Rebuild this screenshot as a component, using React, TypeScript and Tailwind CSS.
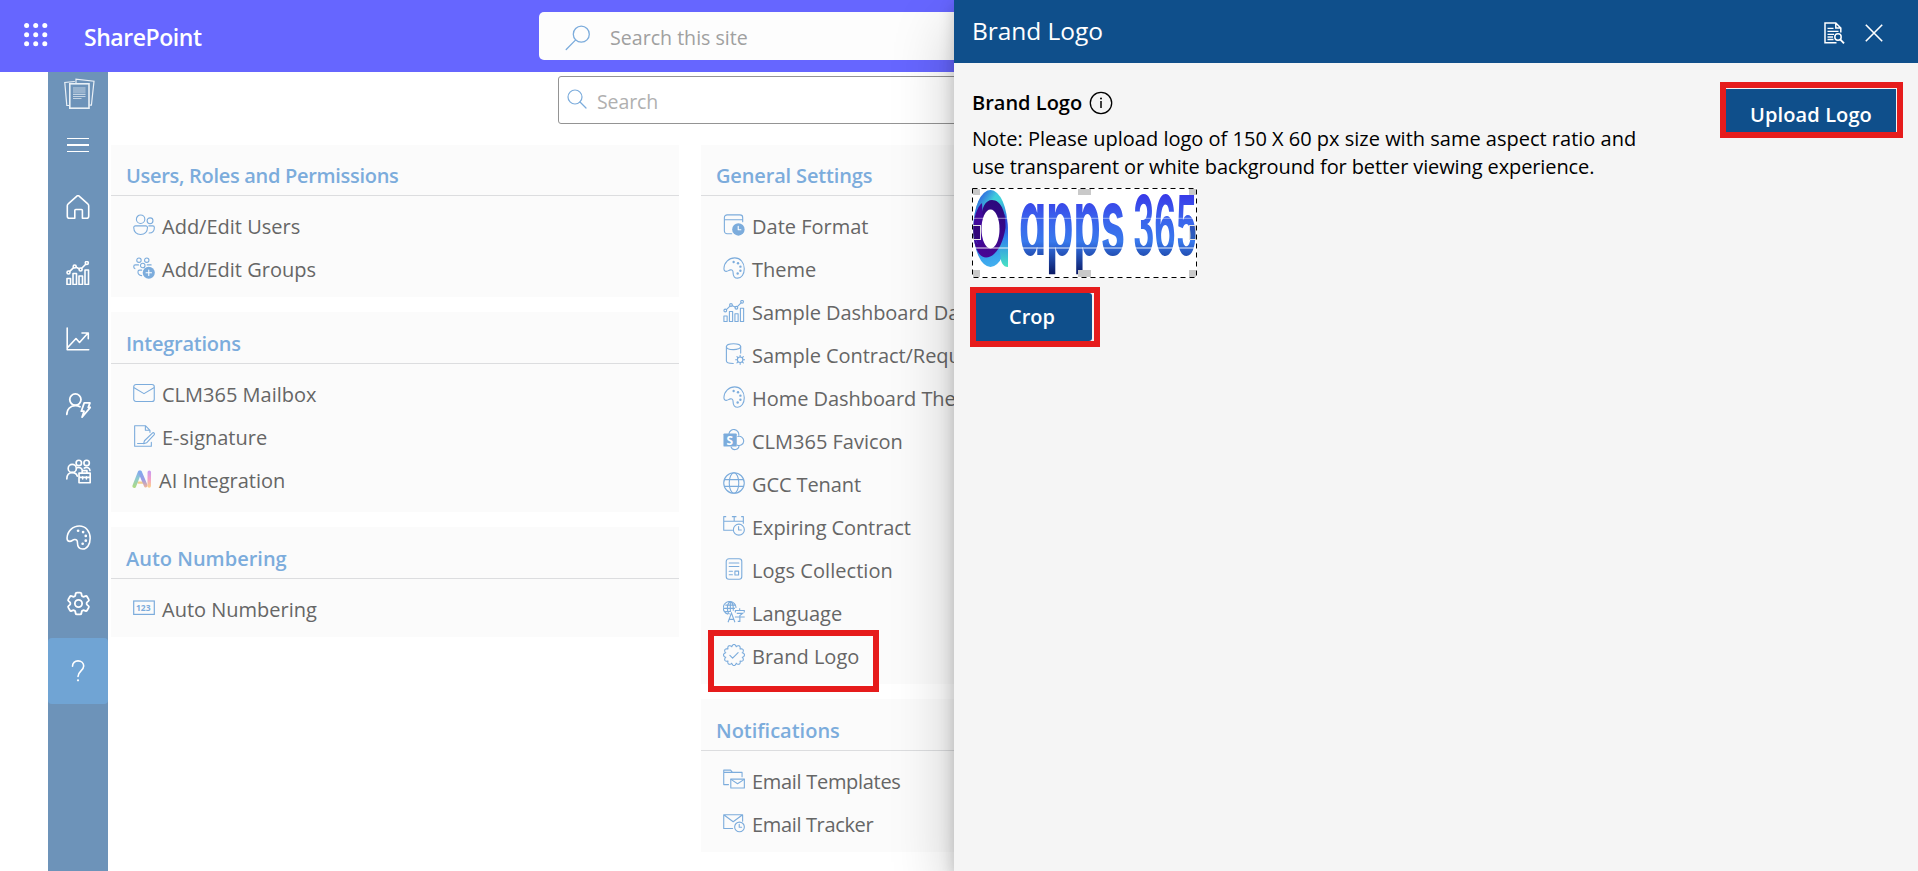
import type { ReactNode } from "react";
import { HiOutlineCog6Tooth } from "react-icons/hi2";

type IconProps = { size?: number; weight?: number };

function Svg({ size = 22, weight = 1.2, children }: IconProps & { children: ReactNode }) {
  return (
    <svg
      width={size}
      height={size}
      viewBox="0 0 24 24"
      fill="none"
      stroke="currentColor"
      strokeWidth={weight}
      strokeLinecap="round"
      strokeLinejoin="round"
      className="shrink-0"
    >
      {children}
    </svg>
  );
}

const Palette = (p: IconProps) => (
  <Svg {...p}>
    <path d="M1 12.6C1.3 5.8 6.6 1 12.8 1 18.900 1 23.200 6 23.200 12.800c0 6-3 10.300-7.200 10.300-3.600 0-5-2.700-5-6 0-2-.8-3.300-2.700-3.100-2 .2-2.700 1.700-4.600 1.700C2 15.700 1 14.500 1 12.600Z" />
    {[[11.600, 5.500], [16.400, 6.800], [19, 10.500], [19, 15], [16, 18]].map(([x, y]) => (
      <circle key={`${x}-${y}`} cx={x} cy={y} r="1.300" fill="currentColor" stroke="none" />
    ))}
  </Svg>
);

const BarsLine = (p: IconProps) => (
  <Svg {...p}>
    <rect x="1" y="17.500" width="3.500" height="6" />
    <rect x="7" y="12.500" width="3.500" height="11" />
    <rect x="13" y="15" width="3.500" height="8.500" />
    <rect x="19" y="9" width="3.500" height="14.500" />
    <circle cx="2.500" cy="11.500" r="1.500" />
    <circle cx="8.700" cy="5.500" r="1.500" />
    <circle cx="14.600" cy="8.500" r="1.500" />
    <circle cx="20.800" cy="2" r="1.500" />
    <path d="m3.700 10.400 3.900-3.800M10.200 6.200l3 1.500M15.700 7.300l4-4.100" />
  </Svg>
);

const Users = () => (
  <Svg>
    <circle cx="8.300" cy="5.700" r="4.600" />
    <circle cx="18.600" cy="7.400" r="3.200" />
    <path d="M2.600 13H14a1.800 1.800 0 0 1 1.800 1.800c0 4.500-3 7.600-7.500 7.600S.8 19.300.8 14.800A1.800 1.800 0 0 1 2.600 13ZM17.300 13h4.300a1.700 1.700 0 0 1 1.700 1.700c0 3.500-2 5.900-5.700 6.100" />
  </Svg>
);

const Groups = () => (
  <Svg>
    <circle cx="6.500" cy="3.500" r="2.400" />
    <circle cx="15" cy="3.500" r="2.400" />
    <circle cx="10.600" cy="9.300" r="2.500" />
    <path d="M6 8.600H2.500C1.300 8.600.8 9.500.8 10.500c0 1 .5 1.700 1.300 2.200M15.500 8.600h4.300M9.500 14.300H7.200c-1.200 0-1.800.9-1.800 2 0 2 1.500 3.600 4 4" />
    <circle cx="17.200" cy="17.200" r="6.600" fill="currentColor" stroke="none" />
    <path d="M17.200 14.200v6M14.200 17.200h6" stroke="#fff" />
  </Svg>
);

const Mail = () => (
  <Svg>
    <rect x=".8" y="2.800" width="22.400" height="18.400" rx="2.500" />
    <path d="m1.200 6.300 10.800 6.400 10.800-6.400" />
  </Svg>
);

const Sign = () => (
  <Svg>
    <path d="M20 19v4.200H1.800V.8h11.700l5 5V8M13.500.8v5h5" />
    <path d="M21.700 8.400a1.400 1.400 0 0 1 1.500 2l-8.400 9-3.200 1 .9-3.200ZM5 20.200h6.600" />
  </Svg>
);

const Ai = () => (
  <svg width="20" height="20" viewBox="0 0 20 20" fill="none" strokeLinecap="round" strokeLinejoin="round" className="-ml-px shrink-0">
    <defs>
      <linearGradient id="ai-a" gradientUnits="userSpaceOnUse" x1="0" y1="2" x2="0" y2="18">
        <stop offset="0" stopColor="#84a9ee" />
        <stop offset=".45" stopColor="#8cc9d2" />
        <stop offset="1" stopColor="#aeda82" />
      </linearGradient>
      <linearGradient id="ai-b" gradientUnits="userSpaceOnUse" x1="0" y1="2" x2="0" y2="18">
        <stop offset="0" stopColor="#7dabee" />
        <stop offset=".55" stopColor="#9b9be4" />
        <stop offset="1" stopColor="#f0b39a" />
      </linearGradient>
      <linearGradient id="ai-c" gradientUnits="userSpaceOnUse" x1="0" y1="2" x2="0" y2="18">
        <stop offset="0" stopColor="#c79af2" />
        <stop offset=".5" stopColor="#f3a0c8" />
        <stop offset="1" stopColor="#fbcf8b" />
      </linearGradient>
    </defs>
    <path d="M6.500 13.600h5" stroke="#f4cf8c" strokeWidth="2.400" />
    <path d="M2.300 17 7.600 3.400" stroke="url(#ai-a)" strokeWidth="3.700" />
    <path d="M8.200 3.400 13.700 16.500" stroke="url(#ai-b)" strokeWidth="3.700" />
    <path d="M17.300 3.200 17.200 17" stroke="url(#ai-c)" strokeWidth="3.500" />
  </svg>
);

const Numbers = () => (
  <svg width="22" height="22" viewBox="0 0 22 22" fill="none" className="shrink-0">
    <rect x=".7" y="4" width="20.600" height="13.400" stroke="currentColor" strokeWidth="1.200" />
    <text x="3" y="13.700" fontSize="8.500" fontWeight="700" fontFamily="Open Sans, sans-serif" fill="currentColor" textLength="14.500">
      123
    </text>
  </svg>
);

const DateIcon = () => (
  <Svg>
    <path d="M9.500 21.500H4.500A3 3 0 0 1 1.500 18.500V4a3 3 0 0 1 3-3H18.500a3 3 0 0 1 3 3V8.500M1.500 6.200h20" />
    <circle cx="16.800" cy="16.800" r="6.800" fill="currentColor" stroke="none" />
    <path d="M16.600 13.300v3.800h2.900" stroke="#fff" />
  </Svg>
);

const Database = () => (
  <Svg>
    <ellipse cx="11.500" cy="4" rx="7.800" ry="3.200" />
    <path d="M3.700 4v15.500c0 1.700 2.600 2.600 7.500 2.900M19.300 4v7" />
    <circle cx="18.700" cy="18.300" r="3" />
    <path d="M18.700 13.400v1.800M18.700 21.400v1.900M13.800 18.300h1.800M21.800 18.300h1.900M15.200 14.800l1.300 1.300M20.900 20.500l1.300 1.300M15.200 21.800l1.300-1.300M20.900 16.100l1.300-1.300" />
  </Svg>
);

const Favicon = () => (
  <Svg>
    <path d="M6.500 5.200a5.400 5.400 0 0 1 10.700 1.600M16.200 8.200a5 5 0 1 1-.6 9.400M17.500 18a4.500 4.500 0 0 1-8.700 1.600" />
    <rect x=".5" y="4.800" width="14.500" height="14.400" rx="1" fill="currentColor" stroke="none" />
    <text x="3.800" y="17" fontSize="13" fontWeight="700" fontFamily="Open Sans, sans-serif" fill="#fff" stroke="none">
      S
    </text>
  </Svg>
);

const Globe = () => (
  <Svg>
    <circle cx="12" cy="12" r="11.200" />
    <ellipse cx="12" cy="12" rx="5.200" ry="11.200" />
    <path d="M1.800 8.300h20.400M1.800 15.700h20.400" />
  </Svg>
);

const Expiring = () => (
  <Svg>
    <path d="M3 1.800H.8v14.800h9.500M.8 6.800h21.400M10.200 1.800h4M12.200 1.800v5M20.300 1.800h1.900V9" />
    <circle cx="17.300" cy="16" r="6" />
    <path d="M17 12.500v3.800h3" />
  </Svg>
);

const Logs = () => (
  <Svg>
    <rect x="3.500" y=".8" width="17" height="22.400" rx="3" />
    <path d="M6.800 5.500h10.500M6.800 9.300h10.500M6.800 14.500h3.500M6.800 18.300h3.500" />
    <rect x="13" y="14.300" width="4" height="4.200" />
  </Svg>
);

const Language = () => (
  <svg width="22" height="22" viewBox="0 0 24 24" fill="none" stroke="currentColor" strokeWidth="1.200" className="shrink-0">
    <path d="M14.300 7.500A7 7 0 1 0 5.500 14.300" />
    <path d="M11.200 10.500V8C11.200 4 9.800 1 8 1S4.800 4 4.800 8s1 5.500 2.200 6.500" />
    <path d="M1 8h12M2.500 4.500h11M2.300 11.500h6M8 1v11" />
    <path d="m5.500 23.200 3.700-10 3.800 10M6.800 20h4.900" />
    <path d="M13.500 12.500V10.300h9.700v2.200M18.200 8v2.300M15 13.500h6.400l-3 2.300v6.400h-2.300M13 17.500h10.700" />
  </svg>
);

const badgePath = (() => {
  const pts: string[] = [];
  for (let i = 0; i <= 144; i++) {
    const a = (i / 144) * Math.PI * 2;
    const r = 9.300 + 2.200 * Math.abs(Math.cos(a * 6)) ** 0.9;
    pts.push(`${(12 + r * Math.sin(a)).toFixed(2)} ${(12 - r * Math.cos(a)).toFixed(2)}`);
  }
  return `M${pts.join("L")}Z`;
})();

const Badge = () => (
  <Svg>
    <path d={badgePath} />
    <path d="m7.500 12.500 3 3 6-6" />
  </Svg>
);

const Templates = () => (
  <Svg>
    <path d="M6 17H.8V1.200h7.500l2 2.500H20.800V8.500M.8 3.700h9.500" />
    <rect x="8.500" y="11" width="14.800" height="9.800" />
    <path d="m8.700 11.300 7.200 4.700 7.200-4.700" />
  </Svg>
);

const Tracker = () => (
  <Svg>
    <path d="M10.500 18H.8V3h20.600v7M.8 3l10.300 7.600L21.400 3" />
    <circle cx="18" cy="16.300" r="5.300" />
    <path d="M17.700 13.500v3.200h2.600" />
  </Svg>
);

const Documents = () => (
  <svg width="31" height="32" viewBox="0 0 31 32" fill="none" stroke="#e9f0f6" strokeWidth="1.200">
    <path d="M5 27.500H2.800L.8 4.500l10-1M12 5V1.200l18 2-2.600 24H25.500" />
    <rect x="5.800" y="5.800" width="19.200" height="24.400" strokeWidth="1.600" />
    <path d="M9 10h12.500M9 12h12.500M9 14h12.500M9 16.300h12.500M9 18.500h12.500M9 20.500h8.500" opacity=".7" />
  </svg>
);

const Home = () => (
  <Svg size={24} weight={1.600}>
    <path d="M1.300 10.800c0-.8.3-1.500.9-2L10.600 1.300a2 2 0 0 1 2.800 0l8.400 7.500c.6.500.9 1.200.9 2v10.400a2 2 0 0 1-2 2h-4.300v-7.700a1 1 0 0 0-1-1H9.800a1 1 0 0 0-1 1v7.700H3.300a2 2 0 0 1-2-2Z" />
  </Svg>
);

const Trend = () => (
  <Svg size={24} weight={1.600}>
    <path d="M1.200 1v21.800h21.500M1.200 21 10 11.500l3.500 4 8.500-9.500M16 6h6.300v5.800" />
  </Svg>
);

const UserBolt = () => (
  <Svg size={25} weight={1.700}>
    <circle cx="9" cy="6.300" r="5.400" />
    <path d="M.8 20.500c0-4.500 3-8.300 8.200-8.300 1.700 0 3.200.4 4.400 1.100M17.500 9.500h5.500l-1.600 4.300h2l-8 9.400 1.900-5.700h-2.600Z" />
  </Svg>
);

const Team = () => (
  <Svg size={25} weight={1.600}>
    <circle cx="6" cy="9" r="3.900" />
    <path d="M.8 19c0-3.600 1.800-5.900 5.200-5.900 2.600 0 4.200 1.300 4.800 3.300" />
    <circle cx="12.300" cy="3.800" r="2.600" />
    <circle cx="19.800" cy="3.800" r="2.600" />
    <path d="M11 8.300c2.500-.5 4 .6 4.500 2M17.500 8.800c2.500-1.600 5.500-.3 5.500 2.300M12.500 13.500h10.700v9.300H12.500ZM15.500 13.500v-2.300h4.600v2.300M12.500 17.700h10.700M16 17v2M19.600 17v2" />
  </Svg>
);

const Question = () => (
  <Svg size={24} weight={1.600}>
    <path d="M6.500 7.200C6.500 4 8.800 1.900 12 1.900s5.700 2.100 5.700 5.200c0 4.400-5.700 5.400-5.700 10.400" />
    <circle cx="12" cy="21.300" r="1.100" fill="currentColor" stroke="none" />
  </Svg>
);

type Item = { icon: ReactNode; label: string; tracking?: string };

function Card({ title, items, size, tracking = "" }: { title: string; items: Item[]; size: string; tracking?: string }) {
  return (
    <section className={`bg-[#fbfbfb] ${size}`}>
      <h2 className={`flex h-[51px] items-center border-b border-[#dcdddf] pt-[11px] pl-[15px] text-[20px] font-semibold text-[#7cacdc] ${tracking}`}>
        {title}
      </h2>
      <ul className="pt-[9px]">
        {items.map((item) => (
          <li key={item.label} className="flex h-[43px] items-center pl-[22px] text-[#666666]">
            <span className="mb-[3px] text-[#7cacdc]">{item.icon}</span>
            <span className={`ml-[7px] whitespace-nowrap ${item.tracking ?? ""}`}>{item.label}</span>
          </li>
        ))}
      </ul>
    </section>
  );
}

function BrandImage() {
  return (
    <svg width="225" height="90" viewBox="0 0 225 90" className="mt-[7px] block">
      <defs>
        <linearGradient id="word" gradientUnits="userSpaceOnUse" x1="0" y1="6" x2="0" y2="88">
          <stop offset="0" stopColor="#3838e8" />
          <stop offset=".3" stopColor="#3a63ec" />
          <stop offset=".58" stopColor="#3878ec" />
          <stop offset=".75" stopColor="#2350b4" />
          <stop offset="1" stopColor="#08145c" />
        </linearGradient>
        <linearGradient id="ring" gradientUnits="userSpaceOnUse" x1="8" y1="0" x2="28" y2="80">
          <stop offset="0" stopColor="#3fc6e6" />
          <stop offset=".2" stopColor="#3fd0d8" />
          <stop offset=".5" stopColor="#2f5fe6" />
          <stop offset=".85" stopColor="#3aa4ec" />
          <stop offset="1" stopColor="#46b4f0" />
        </linearGradient>
        <linearGradient id="left" gradientUnits="userSpaceOnUse" x1="0" y1="10" x2="16" y2="20">
          <stop offset="0" stopColor="#2a3fe0" />
          <stop offset="1" stopColor="#2a3fe0" stopOpacity="0" />
        </linearGradient>
        <linearGradient id="inner" gradientUnits="userSpaceOnUse" x1="28" y1="12" x2="6" y2="70">
          <stop offset="0" stopColor="#2a0a7c" />
          <stop offset="1" stopColor="#4a0596" />
        </linearGradient>
        <linearGradient id="stem" gradientUnits="userSpaceOnUse" x1="0" y1="28" x2="0" y2="78">
          <stop offset="0" stopColor="#2b2fd0" />
          <stop offset=".45" stopColor="#2f86ee" />
          <stop offset="1" stopColor="#47e0c4" />
        </linearGradient>
      </defs>
      <rect width="225" height="90" fill="#fff" />
      <ellipse cx="18.500" cy="40.500" rx="17.200" ry="38.500" fill="url(#ring)" />
      <ellipse cx="18.500" cy="40.500" rx="17.200" ry="38.500" fill="url(#left)" />
      <path d="M27 20C33 24 36 32 36 44V79C31 79 28.500 74 28.500 68L26 56Z" fill="url(#stem)" />
      <path d="M20 12C29 12 34 24 33.500 40 31 56 24 69 14 69.500 6 69.500 1.300 57 1.300 42 3 56 7 60 12 52L10 36C8 24 12 12 20 12Z" fill="url(#inner)" />
      <path d="M1.300 42C1.300 30 5 19 10 15L12 52C9 62 3 56 1.300 42Z" fill="#40089a" />
      <ellipse cx="18.500" cy="41" rx="9" ry="19.500" fill="#fff" />
      <g fill="url(#word)" fontFamily="Inter, sans-serif" fontWeight="650" style={{ fontFeatureSettings: '"cv11"' }}>
        <text x="47" y="67" fontSize="94" textLength="106" lengthAdjust="spacingAndGlyphs">
          apps
        </text>
        <text x="161" y="67" fontSize="82" textLength="64" lengthAdjust="spacingAndGlyphs">
          365
        </text>
      </g>
      <path d="M0 30.300H225" stroke="#fff" strokeOpacity=".5" />
      <path d="M0 60H225" stroke="#fff" strokeOpacity=".45" strokeWidth="2" />
      <g fill="#c9c9c9">
        <rect width="8" height="7" />
        <rect x="106" width="13" height="7" />
        <rect x="217" width="8" height="7" />
        <rect y="82" width="8" height="8" />
        <rect x="106" y="82" width="13" height="8" />
        <rect x="217" y="82" width="8" height="8" />
      </g>
      <g fill="#000" fillOpacity=".2" stroke="#e4e4e4">
        <rect x=".5" y="37.500" width="8" height="14" />
        <rect x="217.500" y="37.500" width="7" height="14" />
      </g>
      <rect x=".5" y=".5" width="224" height="89" fill="none" stroke="#fff" />
      <rect x=".5" y=".5" width="224" height="89" fill="none" stroke="#000" strokeDasharray="5 4" />
    </svg>
  );
}

const sidebar: ReactNode[] = [
  <Home />,
  <BarsLine size={24} weight={1.600} />,
  <Trend />,
  <UserBolt />,
  <Team />,
  <Palette size={25} weight={1.500} />,
  <HiOutlineCog6Tooth size={29} strokeWidth={1.500} />,
  <Question />,
];

export default function App() {
  return (
    <div className="relative flex h-[871px] w-[1918px] flex-col overflow-hidden bg-white font-['Open_Sans','Noto_Sans',sans-serif] text-[20px] leading-[28px]">
      <header className="flex h-[72px] shrink-0 items-center bg-[#6666ff]">
        <svg width="24" height="24" viewBox="0 0 24 24" fill="#fff" className="mb-[2px] ml-[24px]">
          {[2.600, 11.700, 20.800].map((y) => [2.600, 11.700, 20.800].map((x) => <circle key={`${x}-${y}`} cx={x} cy={y} r="2.500" />))}
        </svg>
        <span className="ml-[36px] w-[455px] pt-[2px] text-[23px] font-semibold tracking-[-0.45px] text-white">SharePoint</span>
        <div className="flex h-[48px] w-[900px] items-center rounded-[5px] bg-[#fdfdfd] pl-[26px]">
          <svg width="26" height="26" viewBox="0 0 26 26" fill="none" stroke="#7cacdc" strokeWidth="1.300" strokeLinecap="round" className="mb-[-4px]">
            <circle cx="16.300" cy="9.200" r="8" />
            <path d="M10.700 14.900 1.200 24.500" />
          </svg>
          <span className="ml-[19px] pt-[3px] text-[19.600px] text-[#a0a0a0]">Search this site</span>
        </div>
      </header>

      <div className="flex grow">
        <nav className="ml-[48px] flex w-[60px] shrink-0 flex-col bg-[#6d93b9] text-white">
          <div className="flex h-[44px] items-center justify-center pl-[2px]">
            <Documents />
          </div>
          <div className="flex h-[58px] flex-col items-center justify-center gap-[5px]">
            <span className="h-[1.500px] w-[22px] bg-white" />
            <span className="h-[1.500px] w-[22px] bg-white" />
            <span className="h-[1.500px] w-[22px] bg-white" />
          </div>
          {sidebar.map((icon, i) => (
            <div
              key={i}
              className={`flex h-[66px] items-center justify-center ${i === sidebar.length - 1 ? "mt-[2px] rounded-[4px] bg-[#70a4d4] pb-px" : ""}`}
            >
              {icon}
            </div>
          ))}
        </nav>

        <main className="pt-[4px]">
          <div className="ml-[450px] flex h-[48px] w-[800px] items-center rounded-[3px] border border-[#949494] pl-[8px]">
            <svg width="20" height="20" viewBox="0 0 20 20" fill="none" stroke="#7cacdc" strokeWidth="1.200" strokeLinecap="round" className="mb-[2px]">
              <circle cx="8" cy="8" r="7" />
              <path d="m13 13 6 6" />
            </svg>
            <span className="ml-[10px] pt-[4px] text-[19.500px] text-[#b0b0b0] tracking-[-0.1px]">Search</span>
          </div>

          <div className="mt-[21px] ml-[3px] flex items-start gap-[22px]">
            <div className="flex w-[568px] flex-col">
              <Card
                title="Users, Roles and Permissions"
                size="h-[152px]"
                tracking="tracking-[-0.3px]"
                items={[
                  { icon: <Users />, label: "Add/Edit Users" },
                  { icon: <Groups />, label: "Add/Edit Groups" },
                ]}
              />
              <Card
                title="Integrations"
                size="mt-[15px] h-[200px] pt-px"
                tracking="tracking-[-0.25px]"
                items={[
                  { icon: <Mail />, label: "CLM365 Mailbox" },
                  { icon: <Sign />, label: "E-signature" },
                  { icon: <Ai />, label: "AI Integration" },
                ]}
              />
              <Card title="Auto Numbering" size="mt-[15px] h-[110px] pt-px" items={[{ icon: <Numbers />, label: "Auto Numbering" }]} />
            </div>

            <div className="flex w-[568px] flex-col">
              <Card
                title="General Settings"
                size="h-[539px]"
                tracking="tracking-[-0.15px]"
                items={[
                  { icon: <DateIcon />, label: "Date Format" },
                  { icon: <Palette />, label: "Theme" },
                  { icon: <BarsLine />, label: "Sample Dashboard Data", tracking: "tracking-[-0.05px]" },
                  { icon: <Database />, label: "Sample Contract/Request Data", tracking: "tracking-[-0.05px]" },
                  { icon: <Palette />, label: "Home Dashboard Theme", tracking: "tracking-[-0.05px]" },
                  { icon: <Favicon />, label: "CLM365 Favicon" },
                  { icon: <Globe />, label: "GCC Tenant", tracking: "tracking-[-0.1px]" },
                  { icon: <Expiring />, label: "Expiring Contract", tracking: "tracking-[-0.1px]" },
                  { icon: <Logs />, label: "Logs Collection", tracking: "tracking-[0.05px]" },
                  { icon: <Language />, label: "Language" },
                  { icon: <Badge />, label: "Brand Logo" },
                ]}
              />
              <Card
                title="Notifications"
                size="mt-[15px] h-[153px] pt-px"
                items={[
                  { icon: <Templates />, label: "Email Templates", tracking: "tracking-[-0.3px]" },
                  { icon: <Tracker />, label: "Email Tracker", tracking: "tracking-[-0.35px]" },
                ]}
              />
            </div>
          </div>
        </main>
      </div>

      <div className="absolute top-[630px] left-[708px] h-[62px] w-[171px] border-[6px] border-[#e61c1c]" />

      <aside className="absolute top-0 right-0 flex h-[871px] w-[964px] flex-col bg-[#f5f5f5] text-black shadow-[0_25.6px_57.6px_0_rgba(0,0,0,0.22),0_4.8px_14.4px_0_rgba(0,0,0,0.18)]">
        <div className="flex h-[63px] shrink-0 items-center bg-[#0f4f8b] pr-[35px] pl-[18px] text-white">
          <h1 className="grow pb-[2px] text-[24.500px] tracking-[-0.05px]">Brand Logo</h1>
          <svg width="21" height="22" viewBox="0 0 21 22" fill="none" stroke="#fff" strokeWidth="1.500" className="mt-[2px]">
            <path d="M12.500 20.700H1V1h10.800l5 5v4.500M11.800 1v5h5" />
            <path d="M3.500 6.300h6M3.500 9.300h11M3.500 12.300h6.500M3.500 15h5.500M3.500 17.500h6" strokeWidth="1.300" />
            <circle cx="14" cy="15" r="3.200" />
            <path d="m16.200 17.300 3.800 4" strokeWidth="1.900" />
          </svg>
          <svg width="18" height="18" viewBox="0 0 18 18" fill="none" stroke="#fff" strokeWidth="1.600" className="mt-[2px] ml-[20px]">
            <path d="m.8.800 16.400 16.400M17.200.8.800 17.200" />
          </svg>
        </div>

        <div className="flex items-start pt-[26px] pl-[18px]">
          <div className="w-[700px]">
            <div className="flex h-[28px] items-center">
              <span className="font-semibold">Brand Logo</span>
              <svg width="24" height="24" viewBox="0 0 24 24" fill="none" stroke="#000" strokeWidth="1.300" className="ml-[7px]">
                <circle cx="12" cy="12" r="10.700" />
                <path d="M12 10v7" strokeWidth="1.500" />
                <circle cx="12" cy="7.500" r="1" fill="#000" stroke="none" />
              </svg>
            </div>
            <p className="mt-[8px]">
              Note: Please upload logo of 150 X 60 px size with same aspect ratio and
              <br />
              <span className="tracking-[-0.11px]">use transparent or white background for better viewing experience.</span>
            </p>
            <BrandImage />
            <div className="relative mt-[15px] w-[120px]">
              <button className="block h-[48px] w-[120px] rounded-[3px] bg-[#0f4f8b] text-[20px] font-semibold text-white">Crop</button>
              <span className="absolute top-[-6px] left-[-2px] h-[60px] w-[130px] border-[6px] border-[#e61c1c]" />
            </div>
          </div>
          <div className="relative ml-[54px] w-[170px]">
            <button className="block h-[48px] w-[170px] bg-[#0f4f8b] pt-[3px] text-[20px] font-semibold tracking-[0.1px] text-white">Upload Logo</button>
            <span className="absolute top-[-7px] left-[-6px] h-[56px] w-[183px] border-[6px] border-[#e61c1c]" />
          </div>
        </div>
      </aside>
    </div>
  );
}
